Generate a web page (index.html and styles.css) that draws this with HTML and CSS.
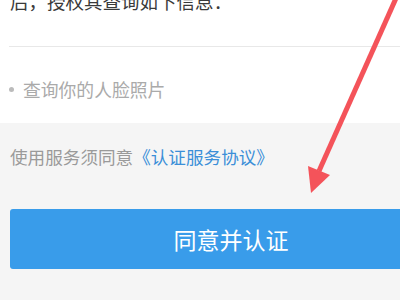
FILE: index.html
```html
<!DOCTYPE html>
<html lang="zh-CN">
<head>
<meta charset="utf-8">
<link rel="stylesheet" href="styles.css">
</head>
<body>
<div class="page">
  <section class="panel">
    <p class="title">后，授权其查询如下信息：</p>
    <div class="divider"></div>
    <ul class="items">
      <li class="item"><span class="dot"></span><span>查询你的人脸照片</span></li>
    </ul>
  </section>
  <p class="agree">使用服务须同意<a class="link">《认证服务协议》</a></p>
  <button class="btn">同意并认证</button>
</div>
<svg class="arrow" width="400" height="300" viewBox="0 0 400 300">
  <line x1="397" y1="-4" x2="319" y2="171" stroke="#f4535a" stroke-width="5" stroke-linecap="butt"/>
  <polygon points="308,166 330,175 311,193" fill="#f4535a"/>
</svg>
</body>
</html>
```
FILE: styles.css
```css
html, body {
  margin: 0;
  padding: 0;
}
body {
  width: 400px;
  height: 300px;
  overflow: hidden;
  background: #f5f5f5;
  font-family: "Noto Sans CJK SC", "Noto Sans", sans-serif;
  position: relative;
}
.page {
  display: flex;
  flex-direction: column;
}
.panel {
  background: #ffffff;
  padding-bottom: 22px;
}
.title {
  margin: -11px 0 33px 10px;
  font-size: 18.5px;
  line-height: 24px;
  color: #3a3a3a;
}
.divider {
  margin-left: 9px;
  border-top: 1px solid #e8e8e8;
}
.items {
  list-style: none;
  margin: 30px 0 0 0;
  padding: 0;
}
.item {
  display: flex;
  align-items: center;
  font-size: 17.8px;
  line-height: 24px;
  color: #aaaaaa;
}
.dot {
  width: 5px;
  height: 5px;
  border-radius: 50%;
  background: #bbbbbb;
  margin: 1px 9px 0 9px;
}
.agree {
  margin: 22px 0 0 10px;
  font-size: 17.6px;
  line-height: 24px;
  color: #9a9a9a;
}
.link {
  color: #3b8fd8;
}
.btn {
  margin: 40px 0 0 10px;
  width: 442px;
  height: 60px;
  border: none;
  border-radius: 3px;
  background: #399cea;
  color: #ffffff;
  font-family: "Noto Sans CJK SC", "Noto Sans", sans-serif;
  font-size: 23px;
  padding: 0;
}
.arrow {
  position: absolute;
  left: 0;
  top: 0;
}
```
